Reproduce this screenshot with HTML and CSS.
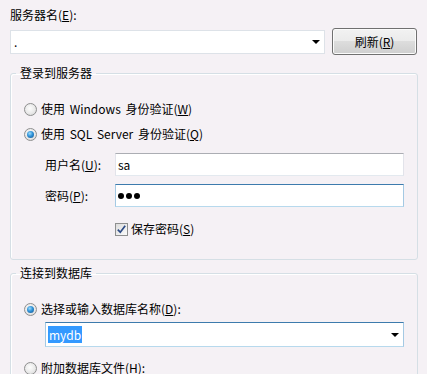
FILE: index.html
```html
<!DOCTYPE html>
<html lang="zh-CN">
<head>
  <meta charset="UTF-8" />
  <title>连接属性</title>
  <link rel="stylesheet" href="styles.css">
</head>
<body>
  <div class="dialog">
    <div class="field-label">服务器名(<u>E</u>):</div>
    <div class="server-row">
      <div class="combo server-combo">
        <span class="combo-text">.</span>
        <span class="arrow"></span>
      </div>
      <button type="button" class="btn">刷新(<u>R</u>)</button>
    </div>

    <!-- 登录 -->
    <fieldset class="group">
      <legend>登录到服务器</legend>
      <div class="group-body">
        <label class="option"><span class="radio"></span>使用 Windows 身份验证(<u>W</u>)</label>
        <label class="option second"><span class="radio checked"></span>使用 SQL Server 身份验证(<u>Q</u>)</label>

        <div class="form-row first">
          <span class="row-label">用户名(<u>U</u>):</span>
          <div class="textbox">sa</div>
        </div>
        <div class="form-row">
          <span class="row-label">密码(<u>P</u>):</span>
          <div class="textbox focused">
            <span class="dot"></span><span class="dot"></span><span class="dot"></span>
          </div>
        </div>
        <label class="check-row">
          <span class="checkbox">
            <svg width="11" height="11" viewBox="0 0 11 11"><path d="M1.8 5.6 L4.3 8.3 L9.2 1.8" fill="none" stroke="#2c4a85" stroke-width="1.7"/></svg>
          </span>保存密码(<u>S</u>)
        </label>
      </div>
    </fieldset>

    <!-- 数据库 -->
    <fieldset class="group db-group">
      <legend>连接到数据库</legend>
      <div class="group-body">
        <label class="option"><span class="radio checked"></span>选择或输入数据库名称(<u>D</u>):</label>
        <div class="combo db-combo focused">
          <span class="selected-text">mydb</span>
          <span class="arrow"></span>
        </div>
        <label class="option last"><span class="radio"></span>附加数据库文件(<u>H</u>):</label>
      </div>
    </fieldset>
  </div>
</body>
</html>
```

FILE: styles.css
```css
body {
  margin: 0;
  background: #f5f1f5;
  color: #000;
  font-family: "Noto Sans CJK SC", sans-serif;
  font-size: 12px;
  line-height: 16px;
  overflow: hidden;
}

.dialog {
  width: 408px;
  padding: 7px 10px 0;
}

u {
  text-decoration: underline;
  text-underline-offset: 1px;
}

.server-row {
  display: flex;
  align-items: center;
  margin-top: 5px;
}

.combo {
  box-sizing: border-box;
  height: 24px;
  display: flex;
  align-items: center;
  justify-content: space-between;
  padding: 0 4px 0 3px;
  background: #fff;
  border: 1px solid #dde2e8;
}

.server-combo {
  width: 315px;
}

.arrow {
  width: 0;
  height: 0;
  border-left: 4px solid transparent;
  border-right: 4px solid transparent;
  border-top: 4px solid #000;
  margin-top: 1px;
}

.btn {
  margin-left: 7px;
  width: 85px;
  height: 27px;
  padding: 0;
  font: inherit;
  color: #000;
  border: 1px solid #707070;
  border-radius: 3px;
  background: linear-gradient(#f2f2f2 0%, #ebebeb 50%, #dddddd 50%, #cfcfcf 100%);
  box-shadow: inset 0 0 0 1px #fbfbfb;
}

.group {
  margin: 10px 0 0;
  padding: 0;
  min-width: 0;
  border: 1px solid #d5dfe5;
  border-radius: 3px;
  box-shadow: inset 1px 1px 0 #fff;
}

.db-group {
  margin-top: 5px;
}

.group legend {
  margin-left: 5px;
  padding: 0 4px;
}

.group-body {
  padding: 20px 13px 22px;
}

.option {
  display: flex;
  align-items: center;
  height: 16px;
  word-spacing: 2px;
}

.option.second {
  margin-top: 9px;
}

.option.last {
  margin-top: 13px;
}

.radio {
  position: relative;
  box-sizing: border-box;
  width: 13px;
  height: 13px;
  margin-right: 4px;
  border: 1px solid #8e8f8f;
  border-radius: 50%;
  background: radial-gradient(circle at 45% 40%, #fdfdfd 0, #e9e9e9 55%, #cfcfcf 100%);
}

.radio.checked::after {
  content: "";
  position: absolute;
  left: 2px;
  top: 2px;
  width: 7px;
  height: 7px;
  border-radius: 50%;
  background: radial-gradient(circle at 40% 35%, #9fdcfb 0, #2f92d8 45%, #175089 100%);
}

.form-row {
  display: flex;
  align-items: center;
  margin-top: 8px;
  padding-left: 21px;
}

.form-row.first {
  margin-top: 11px;
}

.row-label {
  width: 70px;
  flex: none;
}

.textbox {
  box-sizing: border-box;
  flex: 1;
  height: 23px;
  display: flex;
  align-items: center;
  padding-left: 2px;
  background: #fff;
  border: 1px solid #e2e3ea;
  border-top-color: #abadb3;
  border-bottom-color: #e3e9ef;
}

.focused {
  border-color: #a4c9e3;
  border-top-color: #3d7bad;
  border-bottom-color: #b7d9ed;
}

.dot {
  width: 6px;
  height: 6px;
  margin-right: 2px;
  border-radius: 50%;
  background: #000;
}

.check-row {
  display: flex;
  align-items: center;
  height: 16px;
  margin-top: 14px;
  padding-left: 91px;
}

.checkbox {
  box-sizing: border-box;
  width: 13px;
  height: 13px;
  margin-right: 3px;
  display: flex;
  align-items: center;
  justify-content: center;
  border: 1px solid #8e8f8f;
  background: linear-gradient(135deg, #dcdcdc, #fbfbfb);
}

.db-combo {
  height: 25px;
  margin: 5px 0 0 21px;
  padding-left: 2px;
}

.selected-text {
  padding: 0 1px;
  line-height: 17px;
  color: #fff;
  background: #3399ff;
}
```
